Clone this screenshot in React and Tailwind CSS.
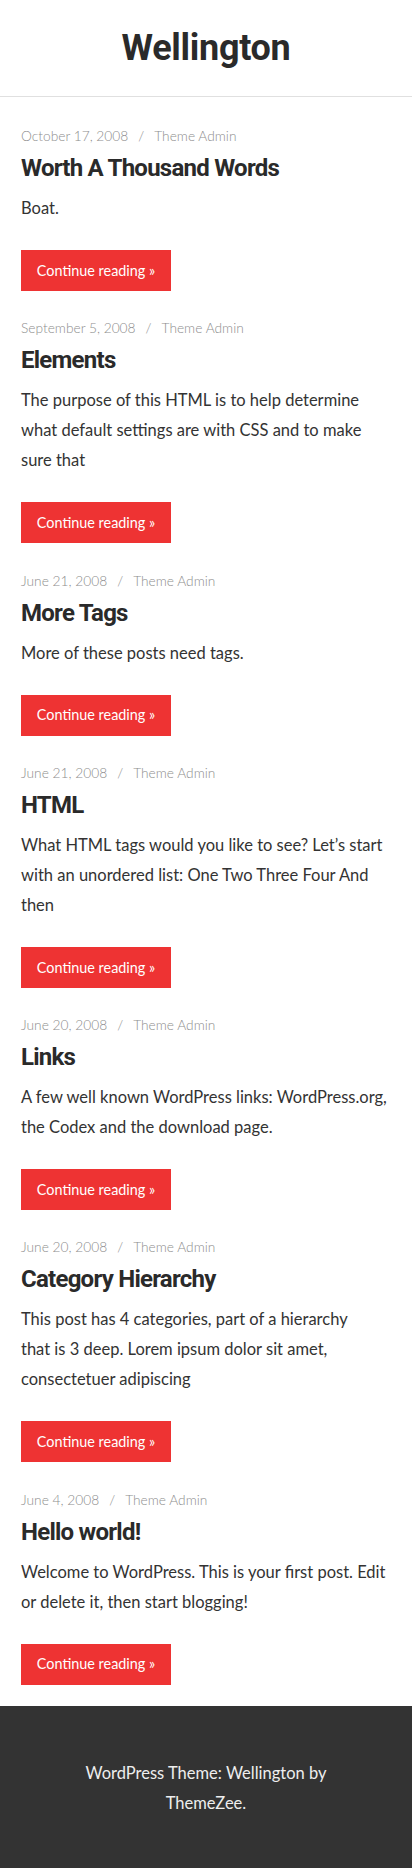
import React from "react";

const posts = [
  { date: "October 17, 2008", title: "Worth A Thousand Words", body: ["Boat."] },
  { date: "September 5, 2008", title: "Elements", body: ["The purpose of this HTML is to help determine", "what default settings are with CSS and to make", "sure that"] },
  { date: "June 21, 2008", title: "More Tags", body: ["More of these posts need tags."] },
  { date: "June 21, 2008", title: "HTML", body: ["What HTML tags would you like to see? Let’s start", "with an unordered list: One Two Three Four And", "then"] },
  { date: "June 20, 2008", title: "Links", body: ["A few well known WordPress links: WordPress.org,", "the Codex and the download page."] },
  { date: "June 20, 2008", title: "Category Hierarchy", body: ["This post has 4 categories, part of a hierarchy", "that is 3 deep. Lorem ipsum dolor sit amet,", "consectetuer adipiscing"] },
  { date: "June 4, 2008", title: "Hello world!", body: ["Welcome to WordPress. This is your first post. Edit", "or delete it, then start blogging!"] },
];

const body = { fontFamily: 'Lato, "Open Sans", "Liberation Sans", sans-serif' };
const head = { fontFamily: 'Roboto, "Liberation Sans", sans-serif' };

export default function App() {
  return (
    <div className="min-h-[1868px] bg-white flex flex-col" style={body}>
      <header className="h-[97px] border-b border-[#e0e0e0] flex items-center justify-center">
        <h1 className="text-[36px] font-bold text-[#2a2a2a] leading-none tracking-[-0.3px]" style={head}>Wellington</h1>
      </header>
      <main className="px-[21px] pt-[27px] flex flex-col gap-[25.3px]">
        {posts.map((p, i) => (
          <article key={i} className="flex flex-col">
            <div className="text-[13.75px] leading-[24px] text-[#8e8e8e] font-light">
              {p.date}<span className="mx-[10px]">/</span>Theme Admin
            </div>
            <h2 className="mt-[2px] text-[24px] leading-[36px] font-bold text-[#2a2a2a] tracking-[-0.75px]" style={head}>{p.title}</h2>
            <p className="mt-[7px] text-[16.5px] leading-[30px] text-[#333333]">
              {p.body.map((l, j) => (
                <span key={j} className="block whitespace-nowrap">{l}</span>
              ))}
            </p>
            <div className="mt-[27px]">
              <a className="inline-flex items-center justify-center w-[150px] h-[41px] bg-[#ee3333] text-white text-[14.4px]">Continue reading »</a>
            </div>
          </article>
        ))}
      </main>
      <footer className="mt-[21px] flex-1 bg-[#333333] flex flex-col items-center pt-[52px] pb-[50px]">
        <p className="text-center text-[16.5px] leading-[30px] text-[#eeeeee]">
          <span className="block">WordPress Theme: Wellington by</span>
          <span className="block">ThemeZee.</span>
        </p>
      </footer>
    </div>
  );
}
